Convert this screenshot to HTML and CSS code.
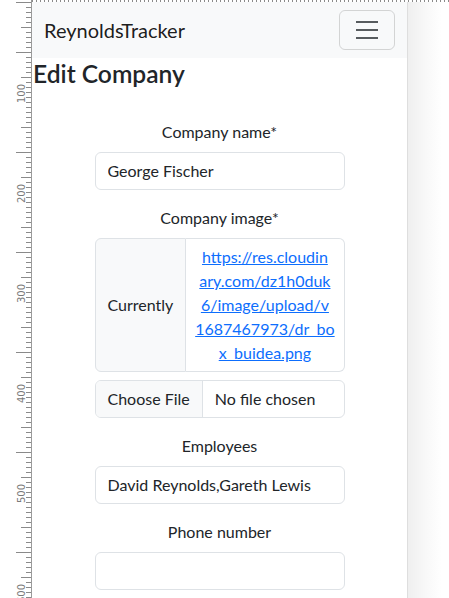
FILE: index.html
```html
<!DOCTYPE html>
<html lang="en">
<head>
<meta charset="utf-8">
<title>ReynoldsTracker - Edit Company</title>
<link rel="stylesheet" href="styles.css">
</head>
<body>
<div class="vruler">
  <svg width="32" height="598" viewBox="0 0 32 598" xmlns="http://www.w3.org/2000/svg">
    <g fill="#8a8a8a" id="ticks"></g>
    <rect x="31" y="0" width="1" height="598" fill="#9a9a9a"/>
    <g class="rlabels" fill="#7a7a7a" font-size="10" font-family="'DejaVu Sans', sans-serif">
      <text transform="translate(25,103) rotate(-90)">100</text>
      <text transform="translate(25,203) rotate(-90)">200</text>
      <text transform="translate(25,303) rotate(-90)">300</text>
      <text transform="translate(25,403) rotate(-90)">400</text>
      <text transform="translate(25,503) rotate(-90)">500</text>
      <text transform="translate(25,603) rotate(-90)">600</text>
    </g>
  </svg>
</div>
<div class="workspace">
  <div class="hruler"></div>
  <div class="stage">
    <div class="viewport">
      <nav class="navbar">
        <a class="brand" href="#">ReynoldsTracker</a>
        <button class="toggler" type="button" aria-label="Toggle navigation">
          <svg width="30" height="30" viewBox="0 0 30 30" xmlns="http://www.w3.org/2000/svg">
            <path d="M4 7h22M4 15h22M4 23h22" stroke="rgba(33,37,41,0.75)" stroke-width="2" stroke-linecap="butt" fill="none"/>
          </svg>
        </button>
      </nav>
      <h2 class="page-title">Edit Company</h2>
      <form class="company-form">
        <div class="field">
          <label class="field-label" for="name">Company name*</label>
          <input class="form-control" id="name" type="text" value="George Fischer">
        </div>
        <div class="field">
          <label class="field-label">Company image*</label>
          <div class="input-group">
            <span class="group-text">Currently</span>
            <span class="group-link"><a href="#">https://res.cloudin<br>ary.com/dz1h0duk<br>6/image/upload/v<br>1687467973/dr_bo<br>x_buidea.png</a></span>
          </div>
          <input class="form-control file-input" type="file">
        </div>
        <div class="field">
          <label class="field-label" for="emp">Employees</label>
          <input class="form-control" id="emp" type="text" value="David Reynolds,Gareth Lewis">
        </div>
        <div class="field">
          <label class="field-label" for="phone">Phone number</label>
          <input class="form-control" id="phone" type="text" value="">
        </div>
      </form>
    </div>
    <div class="backdrop"></div>
  </div>
</div>
<script>
(function(){
  var g=document.getElementById('ticks');
  var ns='http://www.w3.org/2000/svg';
  for(var k=0;k<120;k++){
    var y=2+5*k, x=26;
    if(k%20===0 && k>0){x=26;}
    else if(k%10===0){x=16;}
    else if(k%5===0){x=21;}
    var r=document.createElementNS(ns,'rect');
    r.setAttribute('x',x);r.setAttribute('y',y);
    r.setAttribute('width',31-x);r.setAttribute('height',1);
    g.appendChild(r);
  }
})();
</script>
</body>
</html>
```

FILE: styles.css
```css
* { box-sizing: border-box; }
html, body { margin: 0; padding: 0; }
body {
  width: 449px;
  height: 598px;
  overflow: hidden;
  display: flex;
  background: #fff;
  font-family: Lato, "Noto Sans", sans-serif;
  color: #212529;
}
.vruler { width: 32px; flex: none; background: #fff; }
.vruler svg { display: block; }
.workspace { flex: 1; display: flex; flex-direction: column; min-width: 0; }
.hruler {
  height: 2px;
  flex: none;
  background: repeating-linear-gradient(to right, #8a8a8a 0 1px, transparent 1px 4px);
}
.stage { flex: 1; display: flex; min-height: 0; }
.viewport {
  width: 376px;
  flex: none;
  border-right: 1px solid #dedede;
  overflow: hidden;
  background: #fff;
}
.backdrop { flex: 1; background: linear-gradient(to right, #efefef, #f8f8f8 18px, #fff 34px); }

.navbar {
  background: #f8f9fa;
  padding: 8px 12px;
  display: flex;
  align-items: center;
  justify-content: space-between;
}
.brand {
  font-size: 20px;
  line-height: 30px;
  color: rgba(0,0,0,.9);
  text-decoration: none;
}
.toggler {
  width: 56px;
  height: 40px;
  padding: 4px 12px;
  border: 1px solid rgba(0,0,0,.15);
  border-radius: 6px;
  background: transparent;
  display: flex;
  align-items: center;
  justify-content: center;
}
.toggler svg { display: block; }

.page-title {
  margin: 0 0 8px;
  padding: 1px 0 0 1px;
  font-size: 24.6px;
  line-height: 1.2;
  font-weight: 600;
  color: #212529;
}

.company-form {
  width: 250px;
  margin: 31px auto 0;
  display: flex;
  flex-direction: column;
  gap: 16px;
}
.field { display: flex; flex-direction: column; }
.field-label {
  display: block;
  text-align: center;
  font-size: 16px;
  line-height: 24px;
  margin-bottom: 8px;
}
.form-control {
  display: block;
  width: 100%;
  height: 38px;
  padding: 6px 12px;
  font-family: inherit;
  font-size: 16px;
  line-height: 24px;
  color: #212529;
  background: #fff;
  border: 1px solid #dee2e6;
  border-radius: 6px;
  outline: none;
}
.input-group {
  display: flex;
  align-items: stretch;
  margin-bottom: 8px;
}
.group-text {
  display: flex;
  align-items: center;
  padding: 6px 12px;
  font-size: 16px;
  line-height: 24px;
  background: #f8f9fa;
  border: 1px solid #dee2e6;
  border-radius: 6px 0 0 6px;
  white-space: nowrap;
}
.group-link {
  flex: 1;
  min-width: 0;
  overflow: hidden;
  padding: 6px 4px;
  text-align: center;
  font-size: 16px;
  line-height: 24px;
  border: 1px solid #dee2e6;
  border-left: 0;
  border-radius: 0 6px 6px 0;
  white-space: nowrap;
}
.group-link a { color: #0d6efd; text-decoration: underline; }

.file-input { overflow: hidden; padding: 6px 12px; }
.file-input::file-selector-button {
  font-family: inherit;
  font-size: 16px;
  line-height: 24px;
  padding: 6px 12px;
  margin: -6px 12px -6px -12px;
  color: #212529;
  background: #f8f9fa;
  border: 0;
  border-right: 1px solid #dee2e6;
  border-radius: 0;
}
```
